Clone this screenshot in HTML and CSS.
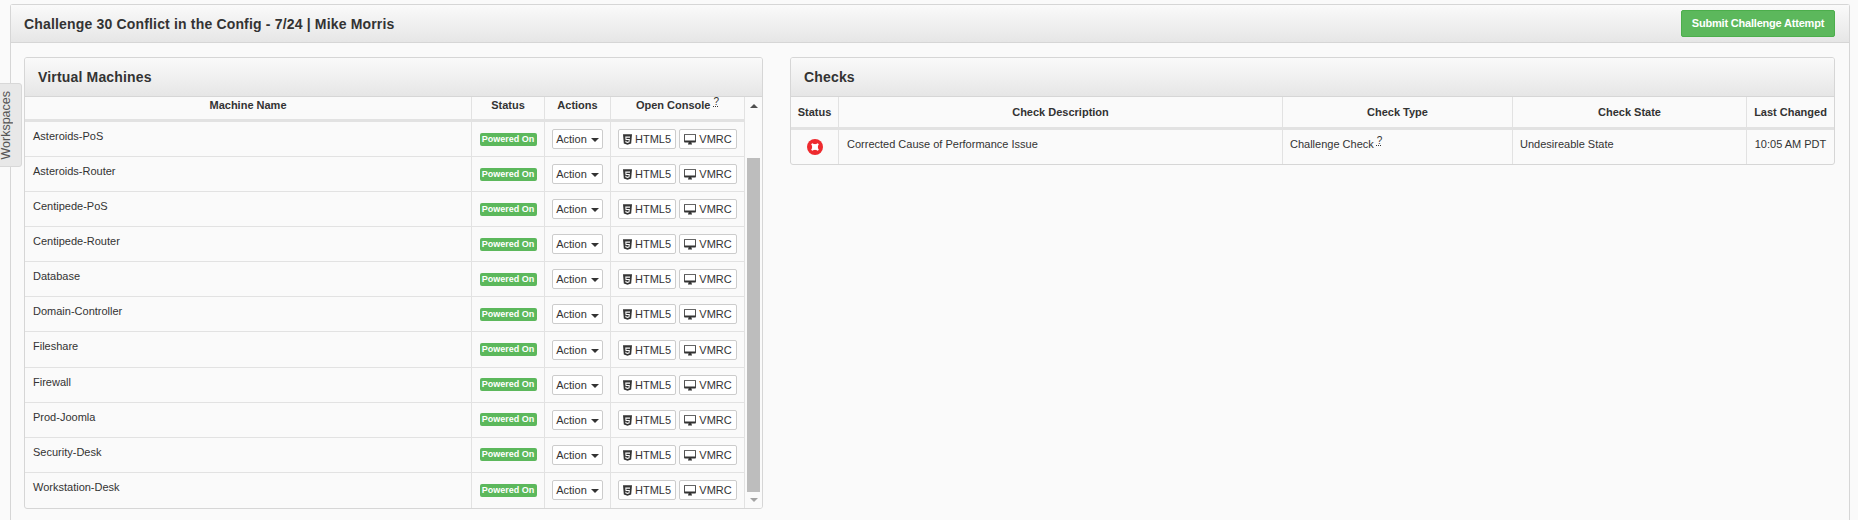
FILE: index.html
```html
<!DOCTYPE html>
<html lang="en">
<head>
<meta charset="utf-8">
<title>Challenge 30 Conflict in the Config</title>
<link rel="stylesheet" href="styles.css">
</head>
<body>
<svg class="defs" width="0" height="0" aria-hidden="true">
  <symbol id="i-html5" viewBox="0 0 12 14">
    <path fill="#333" fill-rule="evenodd" d="M0 0h12l-1.100 12.200L6 14l-4.900-1.800zM3 3l.4 4.600h4.200l-.1 2L6 10.100l-1.500-.5-.1-1.100H3.100l.2 2.200L6 11.600l2.700-.9.4-4.500H4.600l-.1-1.700h4.800L9.400 3z"/>
  </symbol>
  <symbol id="i-desktop" viewBox="0 0 14 13">
    <path fill="#333" fill-rule="evenodd" d="M.8 0h12.400c.4 0 .8.4.8.8v8.400c0 .4-.4.8-.8.8H8.600c0 .8.3 1.300.8 1.800v.6H4.600v-.6c.5-.5.8-1 .8-1.800H.8C.4 10 0 9.600 0 9.200V.8C0 .4.4 0 .8 0zM1 1v6.800h12V1z"/>
  </symbol>
</svg>
<div class="tab"><span class="tab-text">Workspaces</span></div>
<main class="page">
  <header class="page-head">
    <h1 class="page-title">Challenge 30 Conflict in the Config - 7/24 | Mike Morris</h1>
    <button class="submit">Submit Challenge Attempt</button>
  </header>
  <div class="columns">
    <section class="panel panel-vm">
      <h2 class="panel-title">Virtual Machines</h2>
      <div class="vm-body">
        <table class="grid vm-table">
          <colgroup><col class="c-name"><col class="c-status"><col class="c-actions"><col class="c-console"></colgroup>
          <thead>
            <tr><th>Machine Name</th><th>Status</th><th>Actions</th><th>Open Console <sup class="help">?</sup></th></tr>
          </thead>
          <tbody>
            <tr><td class="name">Asteroids-PoS</td><td class="ctr"><span class="label">Powered On</span></td><td class="ctr"><button class="btn">Action <i class="caret"></i></button></td><td class="ctr"><button class="btn con"><svg class="ic5"><use href="#i-html5"/></svg> HTML5</button><button class="btn con"><svg class="icd"><use href="#i-desktop"/></svg> VMRC</button></td></tr>
            <tr><td class="name">Asteroids-Router</td><td class="ctr"><span class="label">Powered On</span></td><td class="ctr"><button class="btn">Action <i class="caret"></i></button></td><td class="ctr"><button class="btn con"><svg class="ic5"><use href="#i-html5"/></svg> HTML5</button><button class="btn con"><svg class="icd"><use href="#i-desktop"/></svg> VMRC</button></td></tr>
            <tr><td class="name">Centipede-PoS</td><td class="ctr"><span class="label">Powered On</span></td><td class="ctr"><button class="btn">Action <i class="caret"></i></button></td><td class="ctr"><button class="btn con"><svg class="ic5"><use href="#i-html5"/></svg> HTML5</button><button class="btn con"><svg class="icd"><use href="#i-desktop"/></svg> VMRC</button></td></tr>
            <tr><td class="name">Centipede-Router</td><td class="ctr"><span class="label">Powered On</span></td><td class="ctr"><button class="btn">Action <i class="caret"></i></button></td><td class="ctr"><button class="btn con"><svg class="ic5"><use href="#i-html5"/></svg> HTML5</button><button class="btn con"><svg class="icd"><use href="#i-desktop"/></svg> VMRC</button></td></tr>
            <tr><td class="name">Database</td><td class="ctr"><span class="label">Powered On</span></td><td class="ctr"><button class="btn">Action <i class="caret"></i></button></td><td class="ctr"><button class="btn con"><svg class="ic5"><use href="#i-html5"/></svg> HTML5</button><button class="btn con"><svg class="icd"><use href="#i-desktop"/></svg> VMRC</button></td></tr>
            <tr><td class="name">Domain-Controller</td><td class="ctr"><span class="label">Powered On</span></td><td class="ctr"><button class="btn">Action <i class="caret"></i></button></td><td class="ctr"><button class="btn con"><svg class="ic5"><use href="#i-html5"/></svg> HTML5</button><button class="btn con"><svg class="icd"><use href="#i-desktop"/></svg> VMRC</button></td></tr>
            <tr><td class="name">Fileshare</td><td class="ctr"><span class="label">Powered On</span></td><td class="ctr"><button class="btn">Action <i class="caret"></i></button></td><td class="ctr"><button class="btn con"><svg class="ic5"><use href="#i-html5"/></svg> HTML5</button><button class="btn con"><svg class="icd"><use href="#i-desktop"/></svg> VMRC</button></td></tr>
            <tr><td class="name">Firewall</td><td class="ctr"><span class="label">Powered On</span></td><td class="ctr"><button class="btn">Action <i class="caret"></i></button></td><td class="ctr"><button class="btn con"><svg class="ic5"><use href="#i-html5"/></svg> HTML5</button><button class="btn con"><svg class="icd"><use href="#i-desktop"/></svg> VMRC</button></td></tr>
            <tr><td class="name">Prod-Joomla</td><td class="ctr"><span class="label">Powered On</span></td><td class="ctr"><button class="btn">Action <i class="caret"></i></button></td><td class="ctr"><button class="btn con"><svg class="ic5"><use href="#i-html5"/></svg> HTML5</button><button class="btn con"><svg class="icd"><use href="#i-desktop"/></svg> VMRC</button></td></tr>
            <tr><td class="name">Security-Desk</td><td class="ctr"><span class="label">Powered On</span></td><td class="ctr"><button class="btn">Action <i class="caret"></i></button></td><td class="ctr"><button class="btn con"><svg class="ic5"><use href="#i-html5"/></svg> HTML5</button><button class="btn con"><svg class="icd"><use href="#i-desktop"/></svg> VMRC</button></td></tr>
            <tr><td class="name">Workstation-Desk</td><td class="ctr"><span class="label">Powered On</span></td><td class="ctr"><button class="btn">Action <i class="caret"></i></button></td><td class="ctr"><button class="btn con"><svg class="ic5"><use href="#i-html5"/></svg> HTML5</button><button class="btn con"><svg class="icd"><use href="#i-desktop"/></svg> VMRC</button></td></tr>
          </tbody>
        </table>
        <div class="scrollbar">
          <i class="arrow-up"></i>
          <div class="track"><div class="thumb"></div></div>
          <i class="arrow-down"></i>
        </div>
      </div>
    </section>
    <section class="panel panel-checks">
      <h2 class="panel-title">Checks</h2>
      <table class="grid checks-table">
        <colgroup><col class="k-status"><col class="k-desc"><col class="k-type"><col class="k-state"><col class="k-last"></colgroup>
        <thead>
          <tr><th>Status</th><th>Check Description</th><th>Check Type</th><th>Check State</th><th>Last Changed</th></tr>
        </thead>
        <tbody>
          <tr>
            <td class="ctr"><svg class="err" viewBox="0 0 16 16"><circle cx="8" cy="8" r="8" fill="#ee2a2e"/><circle cx="8" cy="8" r="3" fill="#fff"/><path stroke="#fff" stroke-width="2.400" stroke-linecap="round" d="M5.500 5.500l5 5M10.500 5.500l-5 5"/></svg></td>
            <td class="name">Corrected Cause of Performance Issue</td>
            <td class="name tight">Challenge Check <sup class="help">?</sup></td>
            <td class="name tight">Undesireable State</td>
            <td class="name last">10:05 AM PDT</td>
          </tr>
        </tbody>
      </table>
    </section>
  </div>
</main>
</body>
</html>
```
FILE: styles.css
```css
* { box-sizing: border-box; }
html, body { height: 100%; }
body {
  margin: 0;
  height: 100vh;
  overflow: hidden;
  background: #fafafa;
  color: #333;
  font: 11px/16px "Liberation Sans", Arial, sans-serif;
  padding: 4px 8px 0 10px;
}
.defs { position: absolute; }
.tab {
  position: absolute;
  left: -1px;
  top: 83px;
  width: 23px;
  height: 84px;
  background: #e8e8e8;
  border: 1px solid #d8d8d8;
  border-radius: 0 3px 3px 0;
  display: flex;
  align-items: center;
  justify-content: flex-start;
  overflow: hidden;
}
.tab-text {
  writing-mode: vertical-rl;
  transform: rotate(180deg);
  font-size: 12.500px;
  line-height: 12px;
  color: #555;
}
.page {
  height: 100%;
  border: 1px solid #d6d6d6;
  border-bottom: 0;
  border-radius: 3px 3px 0 0;
}
.page-head {
  height: 38px;
  display: flex;
  align-items: center;
  justify-content: space-between;
  padding: 0 14px 0 13px;
  background: linear-gradient(#fafafa, #e6e6e6);
  border-bottom: 1px solid #d6d6d6;
}
.page-title {
  margin: 0;
  font-size: 14px;
  line-height: 20px;
  font-weight: 700;
  letter-spacing: .17px;
  color: #333;
}
.submit {
  width: 154px;
  height: 27px;
  margin-top: -1px;
  padding: 0;
  font: 700 11px/16px "Liberation Sans", Arial, sans-serif;
  letter-spacing: -.2px;
  color: #fff;
  background: #5cb85c;
  border: 1px solid #4cae4c;
  border-radius: 2px;
}
.columns {
  display: grid;
  grid-template-columns: 739px 1045px;
  column-gap: 27px;
  align-items: start;
  padding: 14px 14px 0 13px;
}
.panel {
  border: 1px solid #d6d6d6;
  border-radius: 3px;
  overflow: hidden;
}
.panel-title {
  margin: 0;
  height: 39px;
  padding: 10px 13px 0;
  font-size: 14px;
  line-height: 18px;
  font-weight: 700;
  letter-spacing: .17px;
  color: #333;
  background: linear-gradient(#fafafa, #e6e6e6);
  border-bottom: 1px solid #d6d6d6;
}
.vm-body { display: flex; align-items: stretch; }
.grid {
  table-layout: fixed;
  border-collapse: separate;
  border-spacing: 0;
}
.vm-table { width: 719px; }
.checks-table { width: 1043px; }
.c-name { width: 446px; }
.c-status { width: 73px; }
.c-actions { width: 66px; }
.c-console { width: 134px; }
.k-status { width: 47px; }
.k-desc { width: 444px; }
.k-type { width: 230px; }
.k-state { width: 234px; }
.k-last { width: 88px; }
.grid th {
  padding: 0 0 6px;
  font-weight: 700;
  font-size: 11px;
  line-height: 16px;
  text-align: center;
  border-left: 1px solid #e2e2e2;
  border-bottom: 3px solid #e2e2e2;
  color: #333;
}
.vm-table th { height: 25px; }
.checks-table th { height: 33px; padding: 7px 0; }
.grid th:first-child, .grid td:first-child { border-left: 0; }
.grid td {
  height: 35.100px;
  padding: 0;
  border-left: 1px solid #e2e2e2;
  border-top: 1px solid #e2e2e2;
  color: #333;
}
.grid tbody tr:first-child td { border-top: 0; height: 34px; }
.vm-table tbody tr:last-child td { height: 36px; }
.name { padding: 6px 8px 8px !important; vertical-align: top; }
.tight { padding-left: 7px !important; }
.last { text-align: center; padding: 6px 0 8px !important; }
.ctr { text-align: center; vertical-align: middle; white-space: nowrap; }
.label {
  display: inline-block;
  width: 57px;
  height: 13px;
  margin-top: -2px;
  vertical-align: middle;
  background: #5cb85c;
  color: #fff;
  font-size: 9px;
  line-height: 12px;
  font-weight: 700;
  border-radius: 2px;
}
.btn {
  display: inline-block;
  height: 20px;
  width: 51px;
  padding: 0;
  vertical-align: middle;
  font: 11px/18px "Liberation Sans", Arial, sans-serif;
  color: #333;
  background: #fff;
  border: 1px solid #ccc;
  border-radius: 2px;
  white-space: nowrap;
}
.con { width: 58px; margin-left: 3px; }
.con:first-child { margin-left: 0; }
.caret {
  display: inline-block;
  margin-left: 1px;
  vertical-align: middle;
  border-top: 4px solid #333;
  border-left: 4px solid transparent;
  border-right: 4px solid transparent;
}
.ic5 { width: 9px; height: 11px; vertical-align: -2px; }
.icd { width: 12px; height: 11px; vertical-align: -2px; }
.help {
  font-size: 10px;
  line-height: 0;
  vertical-align: 4px;
  text-decoration: underline dotted;
  font-weight: 400;
}
.err { display: block; width: 16px; height: 16px; margin: -1px auto 0; }
.scrollbar {
  width: 18px;
  border-left: 1px solid #e2e2e2;
  display: flex;
  flex-direction: column;
  align-items: center;
  background: #fafafa;
}
.arrow-up {
  margin: 7px 0 0;
  border-bottom: 4px solid #505050;
  border-left: 4px solid transparent;
  border-right: 4px solid transparent;
}
.track { flex: 1; width: 100%; padding: 50px 2px 6px; display: flex; }
.thumb { flex: 1; background: #bdbdbd; }
.arrow-down {
  margin: 0 0 6px;
  border-top: 4px solid #a3a3a3;
  border-left: 4px solid transparent;
  border-right: 4px solid transparent;
}
```
